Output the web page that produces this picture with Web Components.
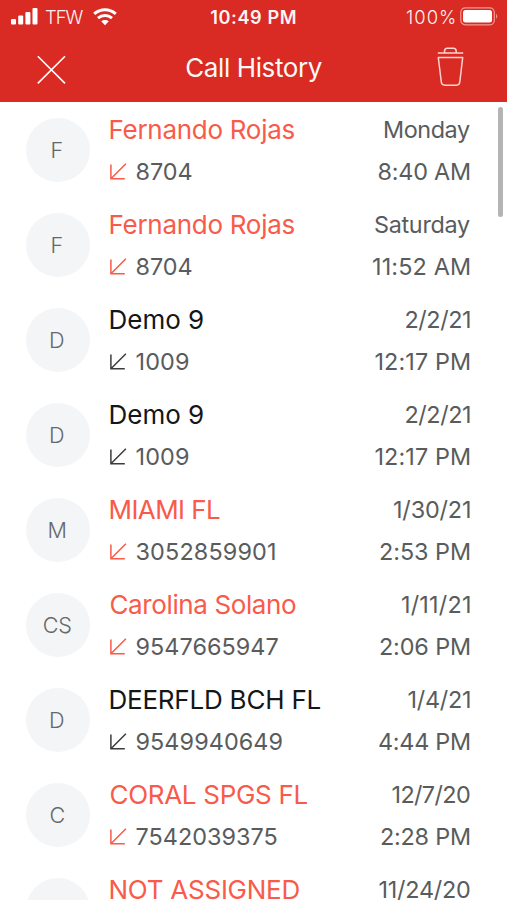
<!DOCTYPE html>
<html lang="en">
<head>
<meta charset="utf-8">
<title>Call History</title>
<style>
  html, body { margin: 0; height: 100%; overflow: hidden; }
  body { background: #fff; font-family: Inter, "Liberation Sans", sans-serif; }
</style>
</head>
<body>
<call-history-app></call-history-app>
<script>
  const ctx = document.createElement('canvas').getContext('2d');

  function shadow(el, html) {
    const t = document.createElement('template');
    t.innerHTML = html;
    el.attachShadow({ mode: 'open' }).append(t.content.cloneNode(true));
  }

  /* A single line of text tracked so that its glyphs span exactly "span" pixels. */
  customElements.define('fit-text', class extends HTMLElement {
    connectedCallback() {
      const size = this.getAttribute('size');
      const weight = this.getAttribute('weight') || 400;
      const text = this.getAttribute('text');
      ctx.font = `${weight} ${size}px Inter, "Liberation Sans", sans-serif`;
      const m = ctx.measureText(text);
      const ink = m.actualBoundingBoxRight + m.actualBoundingBoxLeft;
      const want = parseFloat(this.getAttribute('span')) || ink;
      const track = text.length > 1 ? (want - ink) / (text.length - 1) : 0;
      shadow(this, `<style>
        :host { display: block; white-space: nowrap; }
        span { display: block; width: max-content; font: ${weight} ${size}px/var(--line, 32px) Inter, "Liberation Sans", sans-serif;
          letter-spacing: ${track.toFixed(3)}px;
          margin-left: ${m.actualBoundingBoxLeft.toFixed(2)}px;
          margin-right: ${(m.actualBoundingBoxRight - m.width - track).toFixed(2)}px; }
      </style><span></span>`);
      this.shadowRoot.querySelector('span').textContent = text;
    }
  });

  customElements.define('status-bar', class extends HTMLElement {
    connectedCallback() {
      shadow(this, `<style>
        :host { display: grid; grid-template-columns: 1fr auto 1fr; height: 34px; color: #fff; --line: 22px; padding: 0 9px 0 11px; box-sizing: border-box; }
        div { display: flex; align-items: flex-start; padding-top: 6px; box-sizing: border-box; }
        .mid { margin-right: 3px; }
        svg { display: block; }
        .signal { margin: 2px 7px 0 0; }
        .wifi { margin: 2px 0 0 9px; }
        .end { justify-content: flex-end; margin-left: -3px; }
        .battery { margin: 1px 0 0 5px; }
        fit-text { opacity: .95; }
      </style>
      <div>
        <svg class="signal" width="27" height="17" viewBox="0 0 27 17" fill="#fff"><rect x="0" y="11" width="5" height="5.500" rx="1"/><rect x="7.200" y="7.500" width="5" height="9" rx="1"/><rect x="14.400" y="4" width="5" height="12.500" rx="1"/><rect x="21.500" y="0" width="5" height="16.500" rx="1"/></svg>
        <fit-text text="TFW" size="18.4" weight="300" span="38.5"></fit-text>
        <svg class="wifi" width="24" height="18" viewBox="0 0 24 18"><g fill="none" stroke="#fff" stroke-width="2.900"><path d="M1.200 5.900C7.300 .3 16.700 .3 22.800 5.900"/><path d="M5 10.200C9 6.600 15 6.600 19 10.200"/></g><path d="M12 17.200L8.200 13.300C10.300 11.400 13.700 11.400 15.800 13.300Z" fill="#fff"/></svg>
      </div>
      <div class="mid"><fit-text text="10:49 PM" size="18.2" weight="600" span="85.5"></fit-text></div>
      <div class="end">
        <fit-text text="100%" size="18.4" weight="300" span="48"></fit-text>
        <svg class="battery" width="38" height="19" viewBox="0 0 38 19"><rect x=".8" y=".8" width="33.500" height="17" rx="4.500" fill="none" stroke="#f29a92" stroke-width="1.200"/><rect x="3" y="3" width="29" height="12.600" rx="2.500" fill="#fff"/><path d="M36 6.500Q38.500 9.300 36 12Z" fill="#f29a92"/></svg>
      </div>`);
    }
  });

  customElements.define('nav-bar', class extends HTMLElement {
    connectedCallback() {
      shadow(this, `<style>
        :host { display: grid; grid-template-columns: 1fr auto 1fr; height: 68px; padding: 0 43px 0 37px; color: #fff; box-sizing: border-box; }
        svg { display: block; }
        .close { margin-top: 21px; }
        .trash { justify-self: end; margin-top: 13px; }
        ::slotted(fit-text) { margin: 18px 0 0 7px; opacity: .97; }
      </style>
      <svg class="close" width="29" height="29" viewBox="0 0 29 29"><path d="M.8 1.200L28 28.400M28 1.200L.8 28.400" stroke="#fff" stroke-width="1.600" fill="none"/></svg>
      <slot></slot>
      <svg class="trash" width="27" height="40" viewBox="0 0 27 40" fill="none" stroke="#fbd5d1" stroke-width="1.500"><path d="M.8 6.100H26.200M7.500 6V4.200Q7.500 1.200 10.300 1.200H16.200Q19.200 1.200 19.200 4.200V6"/><path d="M1.300 10.500H25.700L22.800 35Q22.400 38.200 19.300 38.200H7.900Q4.700 38.200 4.300 35Z" stroke-linejoin="round"/></svg>`);
    }
  });

  customElements.define('user-avatar', class extends HTMLElement {
    connectedCallback() {
      const initials = this.getAttribute('initials');
      shadow(this, `<style>
        :host { display: flex; width: 64px; height: 64px; border-radius: 50%; background: #f3f5f7; color: #65686a; align-items: center; justify-content: center; }
      </style>` + (initials ? `<fit-text size="21.6" weight="300" text="${initials}" span="${this.getAttribute('span') || ''}"></fit-text>` : ''));
    }
  });

  customElements.define('call-row', class extends HTMLElement {
    connectedCallback() {
      const [initials, name, nameW, number, numberW, day, dayW, time, timeW, missed] = this.data;
      shadow(this, `<style>
        :host { display: grid; grid-template-columns: 64px 1fr auto; column-gap: 20px; height: 95px; padding: 0 37px 0 25.500px; box-sizing: border-box; }
        user-avatar { margin-top: 15px; }
        .col { display: flex; flex-direction: column; gap: 10px; padding-top: 11px; color: #595c5d; }
        .end { align-items: flex-end; }
        .name { color: ${missed ? '#fa5a49' : '#141617'}; margin-left: 1px; }
        .line { display: flex; gap: 10px; color: ${missed ? '#fa5a49' : '#3a3d3e'}; }
        .line fit-text { color: #595c5d; }
        svg { display: block; margin-top: 7px; flex: none; }
      </style>
      <user-avatar initials="${initials}" span="${initials === 'CS' ? 27.5 : ''}"></user-avatar>
      <div class="col">
        <fit-text class="name" size="26" text="${name}" span="${nameW}"></fit-text>
        ${number ? `<div class="line"><svg width="17" height="17" viewBox="0 0 17 17"><path d="M.9 1.400V15.700H14.800M.9 15.700L15.900 .7" fill="none" stroke="currentColor" stroke-width="1.500"/></svg>
        <fit-text size="23.4" text="${number}" span="${numberW}"></fit-text></div>` : ''}
      </div>
      <div class="col end">
        <fit-text size="23.4" text="${day}" span="${dayW}"></fit-text>
        ${time ? `<fit-text size="23.4" text="${time}" span="${timeW}"></fit-text>` : ''}
      </div>`);
    }
  });

  const calls = [
    ['F', 'Fernando Rojas', 184, '8704', 55, 'Monday', 85, '8:40 AM', 91.5, true],
    ['F', 'Fernando Rojas', 184, '8704', 55, 'Saturday', 95, '11:52 AM', 97, true],
    ['D', 'Demo 9', 92.5, '1009', 52.5, '2/2/21', 64.5, '12:17 PM', 94.5, false],
    ['D', 'Demo 9', 92.5, '1009', 52.5, '2/2/21', 64.5, '12:17 PM', 94.5, false],
    ['M', 'MIAMI FL', 109.5, '3052859901', 138.5, '1/30/21', 76, '2:53 PM', 90, true],
    ['CS', 'Carolina Solano', 185.5, '9547665947', 142, '1/11/21', 68, '2:06 PM', 90, true],
    ['D', 'DEERFLD BCH FL', 210, '9549940649', 146, '1/4/21', 61.5, '4:44 PM', 91, false],
    ['C', 'CORAL SPGS FL', 197, '7542039375', 140, '12/7/20', 77.5, '2:28 PM', 89, true],
    ['', 'NOT ASSIGNED', 189, '', 0, '11/24/20', 90.5, '', 0, true]
  ];

  customElements.define('call-list', class extends HTMLElement {
    connectedCallback() {
      shadow(this, `<style>
        :host { display: block; position: relative; height: 798px; overflow: hidden; padding-top: 1px; box-sizing: border-box; }
        i { position: absolute; right: 4px; top: 5px; width: 5px; height: 110px; border-radius: 3px; background: #b4b4b4; }
      </style><i></i>`);
      for (const c of calls) {
        const row = document.createElement('call-row');
        row.data = c;
        this.shadowRoot.append(row);
      }
    }
  });

  customElements.define('call-history-app', class extends HTMLElement {
    connectedCallback() {
      shadow(this, `<style>
        :host { display: block; height: 900px; overflow: hidden; }
        header { background: #d92a23; height: 102px; }
      </style>
      <header>
        <status-bar></status-bar>
        <nav-bar><fit-text text="Call History" size="26" span="135.5"></fit-text></nav-bar>
      </header>
      <call-list></call-list>`);
    }
  });
</script>
</body>
</html>
